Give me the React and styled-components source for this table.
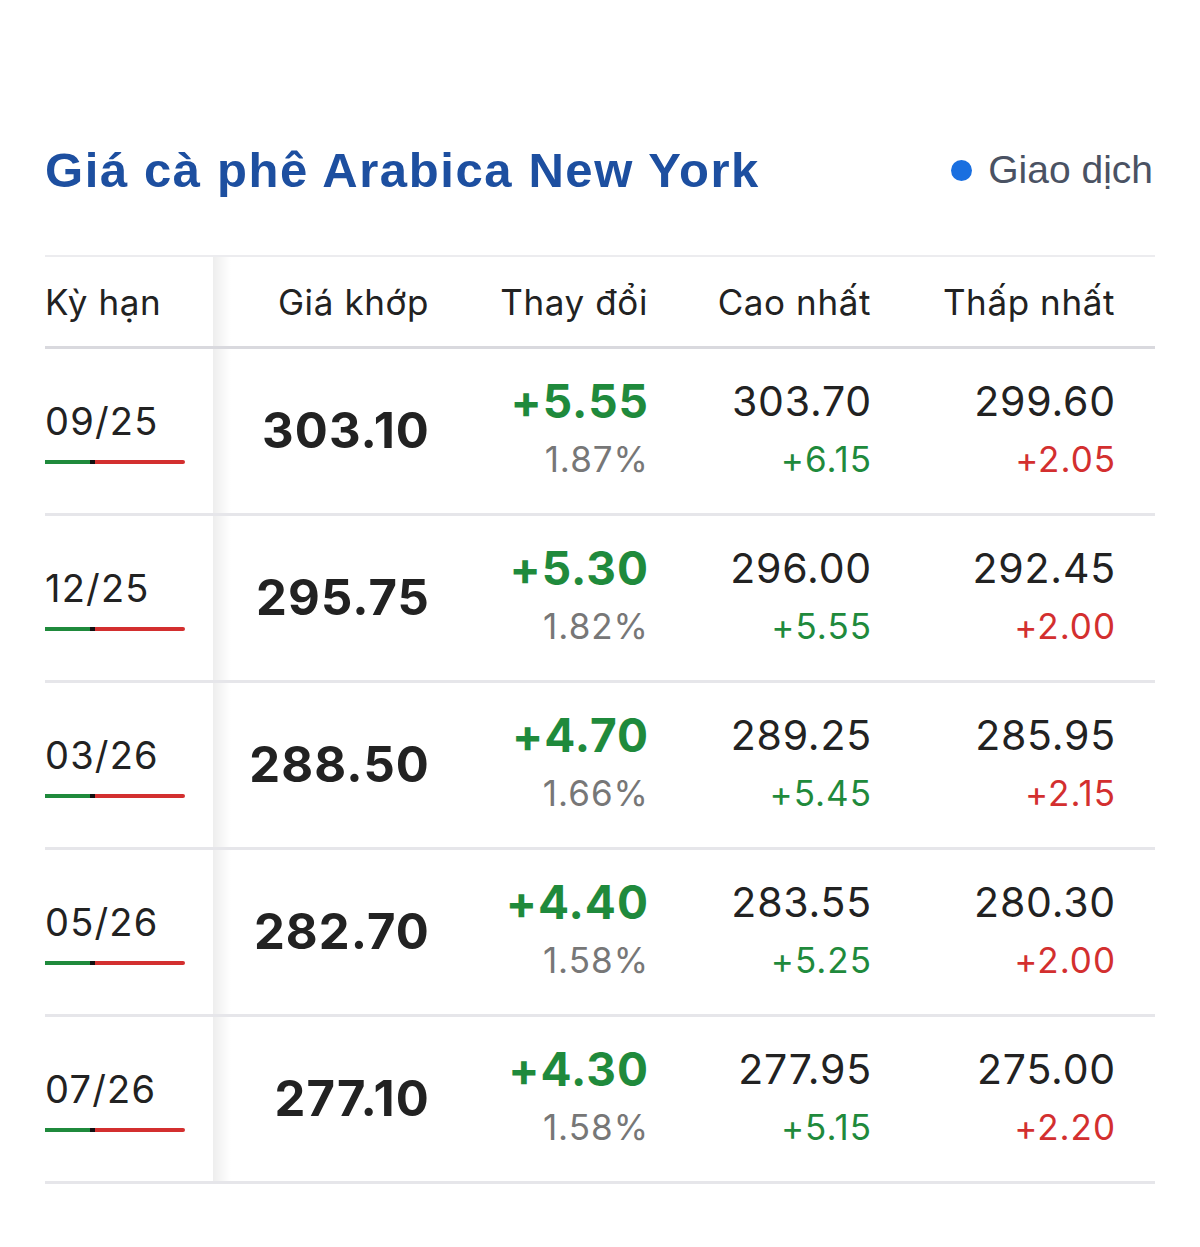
import React from "react";
import styled, { createGlobalStyle } from "styled-components";

const rows = [
  { term: "09/25", price: "303.10", change: "+5.55", pct: "1.87%", high: "303.70", highCh: "+6.15", low: "299.60", lowCh: "+2.05" },
  { term: "12/25", price: "295.75", change: "+5.30", pct: "1.82%", high: "296.00", highCh: "+5.55", low: "292.45", lowCh: "+2.00" },
  { term: "03/26", price: "288.50", change: "+4.70", pct: "1.66%", high: "289.25", highCh: "+5.45", low: "285.95", lowCh: "+2.15" },
  { term: "05/26", price: "282.70", change: "+4.40", pct: "1.58%", high: "283.55", highCh: "+5.25", low: "280.30", lowCh: "+2.00" },
  { term: "07/26", price: "277.10", change: "+4.30", pct: "1.58%", high: "277.95", highCh: "+5.15", low: "275.00", lowCh: "+2.20" },
];

const GREEN = "#1f8a3c";
const RED = "#d32f2f";

export default function App() {
  return (
    <>
      <GlobalStyle />
      <Page>
        <TitleBar>
          <Title>Giá cà phê Arabica New York</Title>
          <Status>
            <Dot />
            Giao dịch
          </Status>
        </TitleBar>
        <Table>
          <HeadRow>
            <HeadCell $left>Kỳ hạn</HeadCell>
            <HeadCell $shade>Giá khớp</HeadCell>
            <HeadCell>Thay đổi</HeadCell>
            <HeadCell>Cao nhất</HeadCell>
            <HeadCell>Thấp nhất</HeadCell>
            <span />
          </HeadRow>
          {rows.map((r) => (
            <Row key={r.term}>
              <TermCell>
                <Term>{r.term}</Term>
                <RangeBar>
                  <Seg $color={GREEN} $w={45} />
                  <Seg $color="#111" $w={5} />
                  <Seg $color={RED} $w={90} $end />
                </RangeBar>
              </TermCell>
              <PriceCell>
                <Price>{r.price}</Price>
              </PriceCell>
              <Cell>
                <Change>{r.change}</Change>
                <Sub $color="#777">{r.pct}</Sub>
              </Cell>
              <Cell>
                <Value>{r.high}</Value>
                <Sub $color={GREEN}>{r.highCh}</Sub>
              </Cell>
              <Cell>
                <Value>{r.low}</Value>
                <Sub $color={RED}>{r.lowCh}</Sub>
              </Cell>
              <span />
            </Row>
          ))}
        </Table>
      </Page>
    </>
  );
}

const GlobalStyle = createGlobalStyle`
  body {
    margin: 0;
    background: #fff;
    font-family: Inter, "Liberation Sans", Arial, sans-serif;
    color: #222;
  }
`;

const Page = styled.div`
  width: 1200px;
  height: 1247px;
  box-sizing: border-box;
  padding: 140px 45px 0 45px;
`;

const TitleBar = styled.div`
  display: flex;
  align-items: center;
  justify-content: space-between;
  height: 60px;
`;

const Title = styled.h1`
  margin: 0;
  font-family: "Liberation Sans", Arial, sans-serif;
  font-weight: 700;
  font-size: 49px;
  color: #1d4fa0;
  letter-spacing: 1.6px;
`;

const Status = styled.div`
  display: flex;
  align-items: center;
  gap: 16px;
  font-family: "Liberation Sans", Arial, sans-serif;
  font-size: 39px;
  color: #4a5263;
  margin-right: 2px;
`;

const Dot = styled.span`
  width: 21px;
  height: 21px;
  border-radius: 50%;
  background: #1a6fe0;
`;

const Table = styled.div`
  margin-top: 55px;
  border-top: 2px solid #ececef;
`;

const grid = `
  display: grid;
  grid-template-columns: 168px 216px 219px 223px 244px 1fr;
`;

const HeadRow = styled.div`
  ${grid}
  height: 89px;
  border-bottom: 3px solid #d9d9de;
`;

const HeadCell = styled.div`
  display: flex;
  align-items: center;
  justify-content: ${({ $left }) => ($left ? "flex-start" : "flex-end")};
  font-size: 35px;
  letter-spacing: 0.6px;
  color: #222;
  background: ${({ $shade }) =>
    $shade ? "linear-gradient(to right, rgba(0,0,0,0.07), rgba(0,0,0,0) 18px)" : "transparent"};
`;

const Row = styled.div`
  ${grid}
  height: 164px;
  border-bottom: 3px solid #e6e6ea;
`;

const TermCell = styled.div`
  display: flex;
  flex-direction: column;
  justify-content: center;
`;

const Term = styled.div`
  font-size: 38px;
  letter-spacing: 1.2px;
  line-height: 44px;
  color: #222;
`;

const RangeBar = styled.div`
  display: flex;
  margin-top: 17px;
  height: 4px;
`;

const Seg = styled.span`
  width: ${({ $w }) => $w}px;
  background: ${({ $color }) => $color};
  border-radius: ${({ $end }) => ($end ? "0 2px 2px 0" : "0")};
`;

const PriceCell = styled.div`
  display: flex;
  align-items: center;
  justify-content: flex-end;
  padding-bottom: 2px;
  background: linear-gradient(to right, rgba(0,0,0,0.07), rgba(0,0,0,0) 18px);
`;

const Price = styled.span`
  font-size: 49px;
  letter-spacing: 1.1px;
  font-weight: 700;
  color: #222;
  margin-right: -1px;
`;

const Cell = styled.div`
  display: flex;
  flex-direction: column;
  align-items: flex-end;
  justify-content: center;
  gap: 12px;
  padding-bottom: 8px;
  margin-right: -1px;
`;

const Change = styled.div`
  font-size: 46px;
  letter-spacing: 1px;
  line-height: 52px;
  font-weight: 700;
  color: ${GREEN};
`;

const Value = styled.div`
  font-size: 41px;
  letter-spacing: 0.8px;
  line-height: 52px;
  color: #222;
`;

const Sub = styled.div`
  font-size: 35px;
  letter-spacing: 1px;
  line-height: 40px;
  color: ${({ $color }) => $color};
`;
